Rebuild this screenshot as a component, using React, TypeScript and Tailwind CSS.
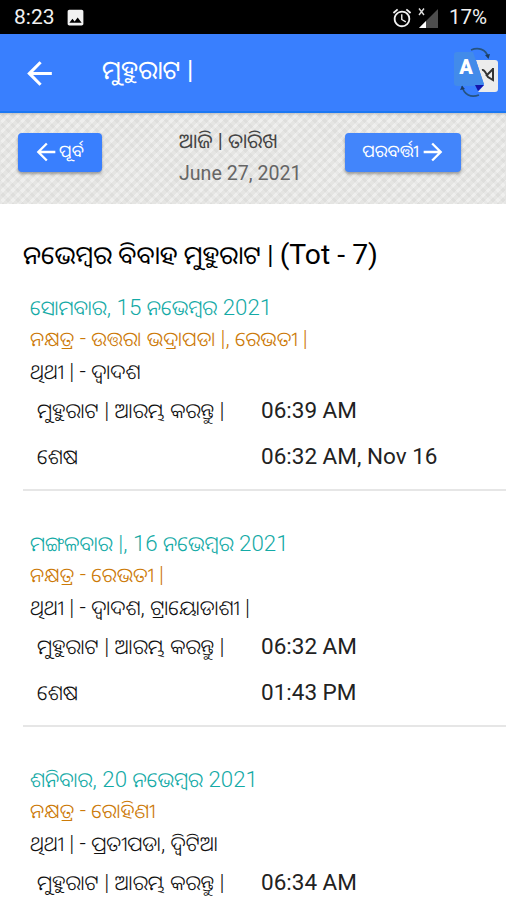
import React from 'react';
import { MdArrowBack, MdArrowForward, MdAlarm, MdImage } from 'react-icons/md';

interface Muhurat {
  id: number;
  day: string;
  nakshatra: string;
  tithi: string;
  start: string;
  end: string;
}

const MUHURATS: Muhurat[] = [
  {
    id: 1,
    day: 'ସୋମବାର, 15 ନଭେମ୍ବର 2021',
    nakshatra: 'ନକ୍ଷତ୍ର - ଉତ୍ତରା ଭଦ୍ରାପଡା |, ରେଭତୀ |',
    tithi: 'ଥିଥୀ | - ଦ୍ୱାଦଶ',
    start: '06:39 AM',
    end: '06:32 AM, Nov 16',
  },
  {
    id: 2,
    day: 'ମଙ୍ଗଳବାର |, 16 ନଭେମ୍ବର 2021',
    nakshatra: 'ନକ୍ଷତ୍ର - ରେଭତୀ |',
    tithi: 'ଥିଥୀ | - ଦ୍ୱାଦଶ, ଟ୍ରାୟୋଡାଶୀ |',
    start: '06:32 AM',
    end: '01:43 PM',
  },
  {
    id: 3,
    day: 'ଶନିବାର, 20 ନଭେମ୍ବର 2021',
    nakshatra: 'ନକ୍ଷତ୍ର - ରୋହିଣୀ',
    tithi: 'ଥିଥୀ | - ପ୍ରତୀପଡା, ଦ୍ୱିଟିଆ',
    start: '06:34 AM',
    end: '06:48 AM, Nov 21',
  },
];

// Odia glyphs run wider than Roboto, so they are set a little smaller
const Mixed: React.FC<{ text: string }> = ({ text }) => (
  <>
    {text.split(/([\u0B00-\u0B7F]+)/).map((part, i) =>
      i % 2 === 1 ? (
        <span key={i} className="text-[0.92em]">{part}</span>
      ) : (
        part
      )
    )}
  </>
);

const StatusBar = () => (
  <div className="flex h-[34px] shrink-0 items-center bg-black pl-[14px] pr-[19px] pt-px text-[21px] text-[#f1f1f1]">
    <span>8:23</span>
    <MdImage size={21} className="ml-[10px]" />
    <div className="ml-auto flex items-center">
      <MdAlarm size={22} />
      <svg width="22" height="22" viewBox="0 0 22 22" className="ml-1">
        <path d="M21 2V21H2Z" fill="#4d4d4d" />
        <path d="M9 14V21H2Z" fill="#fff" />
        <path d="M2 1.500L7 8M7 1.500L2 8" stroke="#ddd" strokeWidth="1.400" />
      </svg>
      <span className="ml-[10px] text-[20.5px]">17%</span>
    </div>
  </div>
);

const TranslateIcon = () => (
  <svg width="50" height="52" viewBox="0 0 50 52">
    <path d="M18 3C25 0 33 2 35 10" fill="none" stroke="#26537f" strokeWidth="1.600" />
    <path d="M32 8L35.500 12L37 7Z" fill="#1c3c60" />
    <path d="M23 13H42Q45 13 45 16V42Q45 45 42 45H25L31 38Z" fill="#ececec" />
    <path d="M4 5H20L31 37L24 39H4Q1 39 1 36V8Q1 5 4 5Z" fill="#428bea" />
    <path d="M22 38H31L25 44Z" fill="#1515a8" />
    <path d="M9 39C11 48 18 51 26 48" fill="none" stroke="#26537f" strokeWidth="1.600" />
    <path d="M7 43L9 39L12 42Z" fill="#1c3c60" />
    <text x="13" y="27" textAnchor="middle" fontSize="20" fontWeight="900" fill="#fff">A</text>
    <path d="M29 23C32 22 33 27 35 30L40 33V21M33 29L40 22" fill="none" stroke="#333" strokeWidth="2" />
  </svg>
);

const TopBar = () => (
  <div className="flex h-[79px] shrink-0 items-center border-b-2 border-[#1c78f3] bg-[#397ffe] pl-[21px] pr-[3px] text-white">
    <MdArrowBack size={37} className="mt-0.5" />
    <h1 className="ml-[44px] whitespace-nowrap pb-1 text-[25.8px]">ମୁହୁରାଟ |</h1>
    <div className="ml-auto">
      <TranslateIcon />
    </div>
  </div>
);

const DateBar = () => (
  <div className="flex h-[91px] shrink-0 items-start bg-[#e5e5e3] bg-[repeating-linear-gradient(45deg,#00000008_0_3px,transparent_3px_7px),repeating-linear-gradient(-45deg,#ffffff60_0_3px,transparent_3px_7px)] pl-[18px] shadow-[inset_0_3px_3px_-2px_#00000030]">
    <button className="mt-5 flex h-[39px] w-[84px] items-center justify-center rounded bg-[#397ffe] pb-px text-[17px] text-white shadow-[0_2px_3px_#00000055]">
      <MdArrowBack size={28} className="-ml-1" />
      <span className="-ml-px whitespace-nowrap">ପୂର୍ବ</span>
    </button>
    <div className="ml-[77px] w-[166px] whitespace-nowrap pt-3 text-[20px] leading-[32px]">
      <div className="text-[20.5px] text-[#444]">ଆଜି | ତାରିଖ</div>
      <div className="text-[19.6px] leading-[34px] text-[#666]">June 27, 2021</div>
    </div>
    <button className="mt-5 flex h-[39px] w-[116px] items-center justify-center rounded bg-[#4285fb] pb-px text-[17px] text-white shadow-[0_2px_3px_#00000055]">
      <span className="-ml-px whitespace-nowrap">ପରବର୍ତ୍ତୀ</span>
      <MdArrowForward size={28} className="-mr-1" />
    </button>
  </div>
);

const MuhuratItem: React.FC<{ item: Muhurat }> = ({ item }) => (
  <div className="mb-[35px] ml-[23px] h-[201px] shrink-0 whitespace-nowrap border-b-2 border-[#e6e6e6] pl-[7px] text-[22.3px] font-light text-[#111]">
    <div className="h-[33px] leading-[34px] text-[#14aaa6]"><Mixed text={item.day} /></div>
    <div className="h-[32px] text-[22px] leading-[32px] text-[#cc7a08]"><Mixed text={item.nakshatra} /></div>
    <div className="h-[32px] leading-[32px]"><Mixed text={item.tithi} /></div>
    <div className="flex h-[46px] items-center pl-[7px] leading-[34px]">
      <span className="w-[224px] text-[22.5px]"><Mixed text="ମୁହୁରାଟ | ଆରମ୍ଭ କରନ୍ତୁ |" /></span>
      <span className="text-[22.5px] font-normal text-[#222]">{item.start}</span>
    </div>
    <div className="flex h-[46px] items-center pl-[7px] leading-[34px]">
      <span className="w-[224px] text-[22.5px]"><Mixed text="ଶେଷ" /></span>
      <span className="text-[22.5px] font-normal text-[#222]">{item.end}</span>
    </div>
  </div>
);

const App: React.FC = () => {
  return (
    <div className="flex h-[900px] w-[506px] flex-col overflow-hidden bg-white font-['Roboto','Noto_Sans_Oriya','Noto_Sans',sans-serif]">
      <StatusBar />
      <TopBar />
      <DateBar />
      <h2 className="ml-[23px] mt-[32px] h-[38px] shrink-0 whitespace-nowrap text-[25.3px] leading-[38px] text-black">
        ନଭେମ୍ବର ବିବାହ ମୁହୁରାଟ | <span className="text-[28.3px]">(Tot - 7)</span>
      </h2>
      <div className="mt-4 flex flex-col">
        {MUHURATS.map((item) => (
          <MuhuratItem key={item.id} item={item} />
        ))}
      </div>
    </div>
  );
};

export default App;
